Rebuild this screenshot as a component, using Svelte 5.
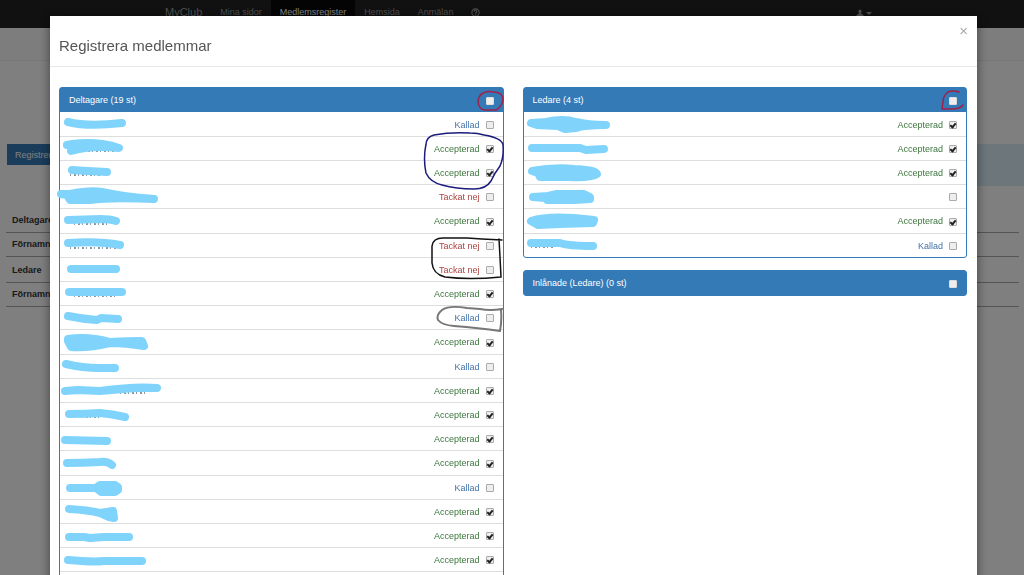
<script lang="ts">
  type Row = { status: string; checked: boolean; mark: string; trace?: string };

  const labels: Record<string, string> = {
    called: 'Kallad',
    accepted: 'Accepterad',
    declined: 'Tackat nej',
    none: ''
  };

  function row(status: string, mark: string, trace = ''): Row {
    return { status, checked: status === 'accepted', mark, trace };
  }

  // names are painted over, mark is the brush path inside the row
  let participants = $state([
    row('called', 'M8 10Q28 15 62 11'),
    row('accepted', 'M7 9L12 8Q38 5 59 12Q30 9 11 15Q17 11 7 9', 'M24 15h32'),
    row('accepted', 'M12 10L28 11L47 12', 'M10 15h30'),
    row('declined', 'M1 10L10 10Q30 6 42 8Q64 13 94 15Q50 13 30 16L10 16L7 11Z'),
    row('accepted', 'M8 12L40 11Q50 11 56 13', 'M14 16h34'),
    row('declined', 'M8 10Q40 8 60 12', 'M10 15h46'),
    row('declined', 'M11 12H56'),
    row('accepted', 'M9 11H62', 'M14 15h44'),
    row('called', 'M8 11Q22 14 37 15L41 13L58 14'),
    row('accepted', 'M8 10Q28 7 50 13Q65 12 82 12L84 17Q65 14 50 14Q30 19 11 18L8 12Z'),
    row('called', 'M6 10Q22 14 40 14H55L40 14Q22 14 6 10'),
    row('accepted', 'M5 13L18 12L40 13Q75 8 97 10L75 10L40 13L18 12Z', 'M60 15h28'),
    row('accepted', 'M9 12Q25 12 40 11Q52 12 65 15', 'M22 15h18'),
    row('accepted', 'M5 14L47 15'),
    row('accepted', 'M7 13Q22 13 40 12Q47 11 52 15'),
    row('called', 'M10 13L36 13L40 10H55L58 12V15L55 17H41L36 13'),
    row('accepted', 'M9 10Q28 11 40 14L53 12L54 19L49 18L40 14'),
    row('accepted', 'M9 14L24 14L30 15L44 14L69 14'),
    row('accepted', 'M8 13L22 14Q35 15 44 14L82 14'),
    row('none', '')
  ]);

  let leaders = $state([
    row('accepted', 'M7 11L22 10Q39 6 52 10Q64 13 82 13Q60 13 52 16L41 17L34 14L13 13Z'),
    row('accepted', 'M8 12H56L62 14L80 13'),
    row('accepted', 'M8 11Q30 7 50 9Q72 10 73 14Q66 18 46 17H16L14 13Z'),
    row('none', 'M9 13L24 12L33 10H60L66 13V15L50 16H23L21 14Z'),
    row('accepted', 'M7 13Q22 8 50 10L70 12L69 15L36 16L14 17Z', 'M64 18h6'),
    row('called', 'M7 10L36 10Q45 13 69 13', 'M7 14h22')
  ]);

  let allParticipants = $state(false);
  let allLeaders = $state(false);
  let allBorrowed = $state(false);

  const navItems = ['Mina sidor', 'Medlemsregister', 'Hemsida', 'Anmälan'];
</script>

{#snippet memberList(rows: Row[], group: string)}
  <ul class="members">
    {#each rows as member, i}
      <li>
        <svg class="name" viewBox="0 1 110 24" aria-hidden="true">
          {#if member.trace}
            <path class="trace" d={member.trace} />
          {/if}
          <path class="brush" d={member.mark} />
        </svg>
        <label class="status {member.status}" for="{group}-{i}">{labels[member.status]}</label>
        <input id="{group}-{i}" type="checkbox" aria-label="{group} {i + 1}" bind:checked={member.checked} />
      </li>
    {/each}
  </ul>
{/snippet}

<div class="page" aria-hidden="true">
  <nav>
    <a class="brand" href="#start">MyClub</a>
    {#each navItems as item}
      <a class:active={item === 'Medlemsregister'} href="#{item}">{item}</a>
    {/each}
    <a href="#help" aria-label="Hjälp">
      <svg class="icon" viewBox="0 0 16 16">
        <circle cx="8" cy="8" r="6.5" />
        <path d="M5.5 6.5Q5.5 4 8 4T10.5 6.5Q10.500 7.500 8.300 9V10M8.300 11V12.500" />
      </svg>
    </a>
    <a class="user" href="#user" aria-label="Konto">
      <svg class="person" viewBox="0 0 16 16">
        <path d="M8 1a3.500 4 0 0 1 2 7v1l5 3v3H1v-3l5-3V8a3.500 4 0 0 1 2-7z" />
      </svg>
      <span class="caret"></span>
    </a>
  </nav>
  <div class="subbar"></div>
  <div class="toolbar">
    <button>Registrera medlemmar</button>
    <div class="info"></div>
  </div>
  <div class="groups">
    <div>Deltagare</div>
    <div>Förnamn</div>
    <div class="tall">Ledare</div>
    <div>Förnamn</div>
  </div>
</div>

<div class="backdrop">
  <div class="modal" role="dialog" aria-labelledby="title">
    <header>
      <h4 id="title">Registrera medlemmar</h4>
      <button class="close" aria-label="Stäng">×</button>
    </header>
    <div class="body">
      <section class="column">
        <div class="panel">
          <div class="heading">
            <label for="all-participants">Deltagare (19 st)</label>
            <input id="all-participants" type="checkbox" bind:checked={allParticipants} />
          </div>
          {@render memberList(participants, 'deltagare')}
          <svg class="pen" viewBox="0 0 100 250" aria-hidden="true">
            <path class="red" d="M78 7Q74 10 74 15Q75 22 80 23H92Q98 20 99 12Q98 5 90 5Q82 3 76 8" />
            <path class="blue" d="M22 58Q22 50 30 48Q46 45 66 46Q74 46 80 48Q98 51 99 58Q100 70 96 79Q90 87 87 94Q82 102 70 102Q52 102 38 98Q26 95 22 86Q19 72 22 57" />
            <path class="black" d="M98 153L78 152L63 151H39Q29 151 28 159V176Q29 187 41 190Q65 193 97 190L96 170L95 152" />
            <path class="grey" d="M98 222Q86 224 76 222L63 221Q45 218 38 223Q32 228 34 233Q38 238 50 239Q75 241 96 244Q98 234 97 223Z" />
          </svg>
        </div>
      </section>
      <section class="column">
        <div class="panel">
          <div class="heading">
            <label for="all-leaders">Ledare (4 st)</label>
            <input id="all-leaders" type="checkbox" bind:checked={allLeaders} />
          </div>
          {@render memberList(leaders, 'ledare')}
          <svg class="pen" viewBox="0 0 100 250" aria-hidden="true">
            <path class="red" d="M92 5Q85 3 81 5Q76 9 76 15L75 22L85 22Q93 22 96 18" />
          </svg>
        </div>
        <div class="panel">
          <div class="heading">
            <label for="all-borrowed">Inlånade (Ledare) (0 st)</label>
            <input id="all-borrowed" type="checkbox" bind:checked={allBorrowed} />
          </div>
        </div>
      </section>
    </div>
  </div>
</div>

<style>
  :global(body) {
    margin: 0;
    background: #fff;
    font-family: "Liberation Sans", Arial, sans-serif;
    font-size: 9px;
    color: #333;
    overflow: hidden;
  }

  nav {
    display: flex;
    height: 28px;
    padding: 0 152px 0 156px;
    background: #222;
    line-height: 24px;
  }

  nav a {
    padding: 0 9px;
    color: #9d9d9d;
    text-decoration: none;
  }

  nav .brand {
    font-size: 11px;
  }

  nav .active {
    background: #080808;
    color: #fff;
  }

  nav .user {
    display: flex;
    align-items: center;
    gap: 2px;
    height: 26px;
    margin-left: auto;
    padding: 0;
  }

  .icon {
    width: 9px;
    height: 9px;
    vertical-align: middle;
    fill: none;
    stroke: currentColor;
    stroke-width: 2;
  }

  .person {
    width: 8px;
    height: 8px;
    fill: currentColor;
  }

  .caret {
    border: 3px solid transparent;
    border-top-color: currentColor;
    border-bottom: 0;
  }

  .subbar {
    height: 32px;
    border-bottom: 1px solid #eee;
    background: #fafafa;
  }

  .toolbar {
    display: flex;
    align-items: flex-start;
    padding: 83px 0 0 7px;
  }

  .toolbar button {
    height: 21px;
    padding: 0 8px;
    border: 0;
    background: #337ab7;
    color: #fff;
    font: inherit;
  }

  .info {
    flex: 1;
    height: 42px;
    background: #d9edf7;
  }

  .groups {
    padding: 23px 5px 0 6px;
    font-weight: bold;
  }

  .groups div {
    padding: 0 6px;
    border-bottom: 1px solid #aaa;
    line-height: 23px;
  }

  .groups .tall {
    padding-top: 2px;
  }

  .backdrop {
    position: fixed;
    inset: 0;
    box-sizing: border-box;
    padding: 16px 47px 0 50px;
    background: rgba(0, 0, 0, 0.5);
    overflow: hidden;
  }

  .modal {
    background: #fff;
    box-shadow: 0 3px 10px rgba(0, 0, 0, 0.5);
  }

  header {
    display: flex;
    justify-content: space-between;
    align-items: flex-start;
    padding: 0 9px;
    border-bottom: 1px solid #e8e8e8;
  }

  h4 {
    margin: 0;
    padding: 20px 0 10px;
    font-size: 15px;
    font-weight: normal;
    line-height: 20px;
    color: #555;
  }

  .close {
    margin-top: 8px;
    padding: 0;
    border: 0;
    background: none;
    color: #aaa;
    font: 15px/14px "Liberation Sans", Arial, sans-serif;
  }

  .body {
    display: grid;
    grid-template-columns: 1fr 1fr;
    gap: 19px;
    padding: 20px 10px 20px 9px;
  }

  .panel {
    position: relative;
    margin-bottom: 12px;
    border: 1px solid #337ab7;
    border-radius: 3px;
  }

  .heading {
    display: flex;
    align-items: center;
    justify-content: space-between;
    height: 24px;
    padding: 0 9px;
    background: #337ab7;
    color: #fff;
  }

  .members {
    margin: 0;
    padding: 0;
    list-style: none;
  }

  li {
    display: flex;
    align-items: center;
    box-sizing: border-box;
    height: 24px;
    padding-right: 9px;
    border-top: 1px solid #ddd;
  }

  li:first-child {
    border-top-color: transparent;
  }

  li:nth-child(5n) {
    height: 25px;
  }

  .name {
    width: 110px;
    height: 24px;
    overflow: visible;
  }

  .brush {
    fill: #80d4fb;
    stroke: #80d4fb;
    stroke-width: 8;
    stroke-linecap: round;
    stroke-linejoin: round;
  }

  .trace {
    stroke: #8a98a0;
    stroke-width: 2;
    stroke-dasharray: 1 3 2 2;
  }

  .status {
    margin: 0 6px 0 auto;
  }

  .called {
    color: #4272a8;
  }

  .accepted {
    color: #3c763d;
  }

  .declined {
    color: #a94442;
  }

  input {
    appearance: none;
    display: grid;
    place-items: center;
    box-sizing: border-box;
    width: 8px;
    height: 8px;
    margin: 1px 0 0;
    border: 1px solid #aaa;
    border-radius: 1px;
    background: #eee;
  }

  .heading input {
    border-color: #ddd;
  }

  input:checked::after {
    content: "";
    width: 2px;
    height: 4px;
    border: solid #222;
    border-width: 0 2px 2px 0;
    transform: rotate(40deg);
  }

  .pen {
    position: absolute;
    top: -1px;
    right: -1px;
    width: 100px;
    height: 250px;
    fill: none;
    stroke-width: 1.5;
    stroke-linecap: round;
    pointer-events: none;
  }

  .red {
    stroke: #a3204a;
  }

  .blue {
    stroke: #1c1c7c;
  }

  .black {
    stroke: #111;
  }

  .grey {
    stroke: #777;
    stroke-width: 2;
  }
</style>
